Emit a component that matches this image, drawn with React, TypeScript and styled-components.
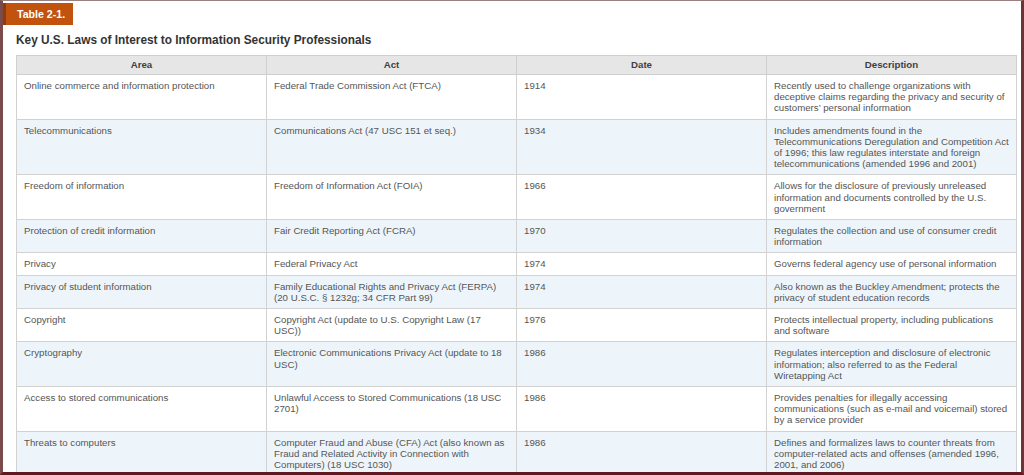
import React from "react";
import styled, { createGlobalStyle } from "styled-components";

const Global = createGlobalStyle`
  html, body { margin: 0; padding: 0; background: #ffffff; }
  body { width: 1024px; height: 475px; overflow: hidden; font-family: Arial, "Liberation Sans", sans-serif; }
`;

const Frame = styled.div`
  box-sizing: border-box;
  width: 1024px;
  height: 475px;
  overflow: hidden;
  border-top: 1px solid #9c7f80;
  border-left: 3px solid #7b4b4c;
  border-right: 3px solid #6d3436;
  border-bottom: 3px solid #5e1a1e;
  background: #fff;
  padding-top: 2px;
`;

const Label = styled.div`
  display: inline-block;
  vertical-align: top;
  box-sizing: border-box;
  height: 22px;
  padding: 0 8px 0 11px;
  background: #c2530f;
  border-left: 3px solid #8f3a0c;
  color: #fff;
  font-weight: bold;
  font-size: 10.6px;
  line-height: 22px;
`;

const Title = styled.h2`
  margin: 8px 0 0 13px;
  font-size: 11.85px;
  line-height: 15px;
  font-weight: bold;
  color: #333;
`;

const Table = styled.table`
  margin: 7px 0 0 13px;
  width: 1001px;
  table-layout: fixed;
  border-collapse: collapse;
  font-size: 9.7px;
  line-height: 11.2px;
  color: #555;
  border: 1px solid #cfcfcf;
`;

const Th = styled.th`
  background: #e6e6e6;
  border: 1px solid #cfcfcf;
  height: 18px;
  padding: 0 7px;
  font-weight: bold;
  color: #3f3f3f;
  text-align: center;
`;

const Row = styled.tr<{ $alt: boolean }>`
  background: ${(p) => (p.$alt ? "#edf5fb" : "#ffffff")};
`;

const Td = styled.td`
  border: 1px solid #d2d2d2;
  padding: 5px 7px;
  vertical-align: top;
  text-align: left;
`;

const rows: [string, string, string, string][] = [
  ["Online commerce and information protection", "Federal Trade Commission Act (FTCA)", "1914", "Recently used to challenge organizations with deceptive claims regarding the privacy and security of customers\u2019 personal information"],
  ["Telecommunications", "Communications Act (47 USC 151 et seq.)", "1934", "Includes amendments found in the Telecommunications Deregulation and Competition Act of 1996; this law regulates interstate and foreign telecommunications (amended 1996 and 2001)"],
  ["Freedom of information", "Freedom of Information Act (FOIA)", "1966", "Allows for the disclosure of previously unreleased information and documents controlled by the U.S. government"],
  ["Protection of credit information", "Fair Credit Reporting Act (FCRA)", "1970", "Regulates the collection and use of consumer credit information"],
  ["Privacy", "Federal Privacy Act", "1974", "Governs federal agency use of personal information"],
  ["Privacy of student information", "Family Educational Rights and Privacy Act (FERPA) (20 U.S.C. \u00a7 1232g; 34 CFR Part 99)", "1974", "Also known as the Buckley Amendment; protects the privacy of student education records"],
  ["Copyright", "Copyright Act (update to U.S. Copyright Law (17 USC))", "1976", "Protects intellectual property, including publications and software"],
  ["Cryptography", "Electronic Communications Privacy Act (update to 18 USC)", "1986", "Regulates interception and disclosure of electronic information; also referred to as the Federal Wiretapping Act"],
  ["Access to stored communications", "Unlawful Access to Stored Communications (18 USC 2701)", "1986", "Provides penalties for illegally accessing communications (such as e-mail and voicemail) stored by a service provider"],
  ["Threats to computers", "Computer Fraud and Abuse (CFA) Act (also known as Fraud and Related Activity in Connection with Computers) (18 USC 1030)", "1986", "Defines and formalizes laws to counter threats from computer-related acts and offenses (amended 1996, 2001, and 2006)"],
];

export default function App() {
  return (
    <>
      <Global />
      <Frame>
        <Label>Table 2-1.</Label>
        <Title>Key U.S. Laws of Interest to Information Security Professionals</Title>
        <Table>
          <thead>
            <tr>
              <Th>Area</Th>
              <Th>Act</Th>
              <Th>Date</Th>
              <Th>Description</Th>
            </tr>
          </thead>
          <tbody>
            {rows.map((r, i) => (
              <Row key={i} $alt={i % 2 === 1}>
                {r.map((c, j) => (
                  <Td key={j}>{c}</Td>
                ))}
              </Row>
            ))}
          </tbody>
        </Table>
      </Frame>
    </>
  );
}
